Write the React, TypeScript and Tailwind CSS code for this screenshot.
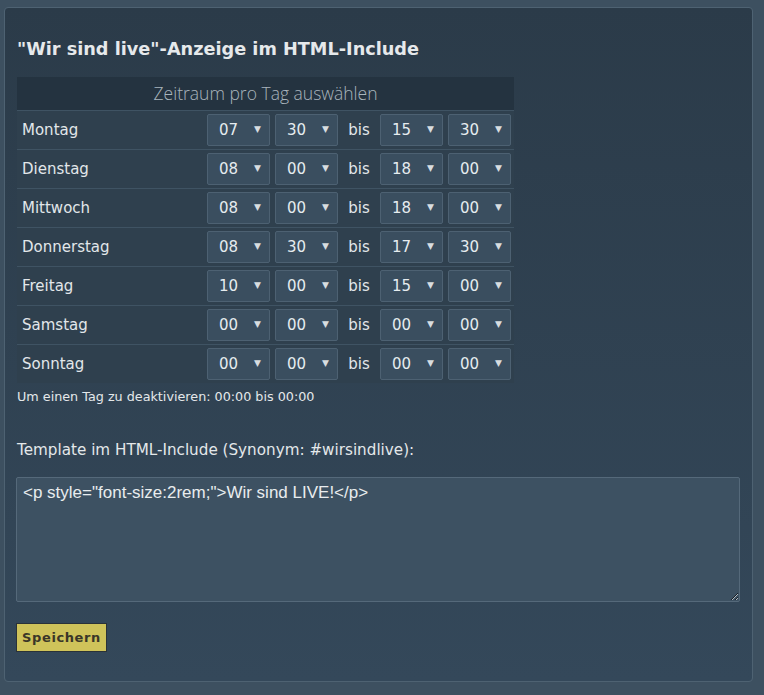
import React from "react";

const days: [string, string, string, string, string][] = [
  ["Montag", "07", "30", "15", "30"],
  ["Dienstag", "08", "00", "18", "00"],
  ["Mittwoch", "08", "00", "18", "00"],
  ["Donnerstag", "08", "30", "17", "30"],
  ["Freitag", "10", "00", "15", "00"],
  ["Samstag", "00", "00", "00", "00"],
  ["Sonntag", "00", "00", "00", "00"],
];

function TimeSelect({ value }: { value: string }) {
  return (
    <div className="flex h-[32px] w-[63px] items-center justify-between rounded-[2px] border border-[#4d6172] bg-[#3a4e5f] pl-[11px] pr-[8px] text-[15px] text-[#e6ecef]">
      <span>{value}</span>
      <span className="text-[9px] text-[#d8dde0]">▼</span>
    </div>
  );
}

export default function App() {
  return (
    <div
      className="min-h-[695px] w-[764px] bg-[#3d5060] pl-[4px] pt-[7px] text-[#e4e8ea]"
      style={{ fontFamily: '"DejaVu Sans", Verdana, sans-serif' }}
    >
      <div className="h-[675px] w-[749px] rounded-[4px] border border-[#4e6272] bg-gradient-to-b from-[#2b3b49] to-[#34485a] pl-[12px] pt-[30px]">
        <h2 className="text-[17.7px] font-bold leading-[22px] text-[#e6e9eb]">
          "Wir sind live"-Anzeige im HTML-Include
        </h2>

        <div className="mt-[17px] w-[497px] bg-[#2f404e]">
          <div
            className="flex h-[33px] items-center justify-center bg-[#243340] text-[17.5px] font-light text-[#a9b5bd]"
            style={{ fontFamily: '"Open Sans", sans-serif' }}
          >
            Zeitraum pro Tag auswählen
          </div>
          {days.map(([day, a, b, c, d]) => (
            <div key={day} className="flex h-[39px] items-center border-t border-[#3f5363]">
              <div className="w-[190px] pl-[5px] text-[15px] text-[#e2e7ea]">{day}</div>
              <TimeSelect value={a} />
              <div className="ml-[5px]">
                <TimeSelect value={b} />
              </div>
              <div className="w-[42px] text-center text-[15px] text-[#e2e7ea]">bis</div>
              <TimeSelect value={c} />
              <div className="ml-[5px]">
                <TimeSelect value={d} />
              </div>
            </div>
          ))}
        </div>

        <p className="mt-[6px] text-[12.75px] leading-[16px] text-[#e4e8ea]">
          Um einen Tag zu deaktivieren: 00:00 bis 00:00
        </p>

        <p className="mt-[36px] text-[15.2px] leading-[18px] text-[#e4e8ea]">
          Template im HTML-Include (Synonym: #wirsindlive):
        </p>

        <textarea
          className="-ml-[1px] mt-[18px] block h-[125px] w-[724px] rounded-[2px] border border-[#55697a] bg-[#3d5162] px-[6px] py-[5px] text-[17px] leading-[20px] text-[#e8ecee] outline-none"
          style={{ fontFamily: '"Liberation Sans Narrow", "Liberation Sans", sans-serif' }}
          defaultValue={'<p style="font-size:2rem;">Wir sind LIVE!</p>'}
        />

        <button className="-ml-[1px] mt-[21px] flex h-[29px] w-[91px] items-center justify-center border border-[#2a3238] bg-[#cfc35a] text-[13px] font-bold tracking-[0.6px] text-[#3a3628]">
          Speichern
        </button>
      </div>
    </div>
  );
}
